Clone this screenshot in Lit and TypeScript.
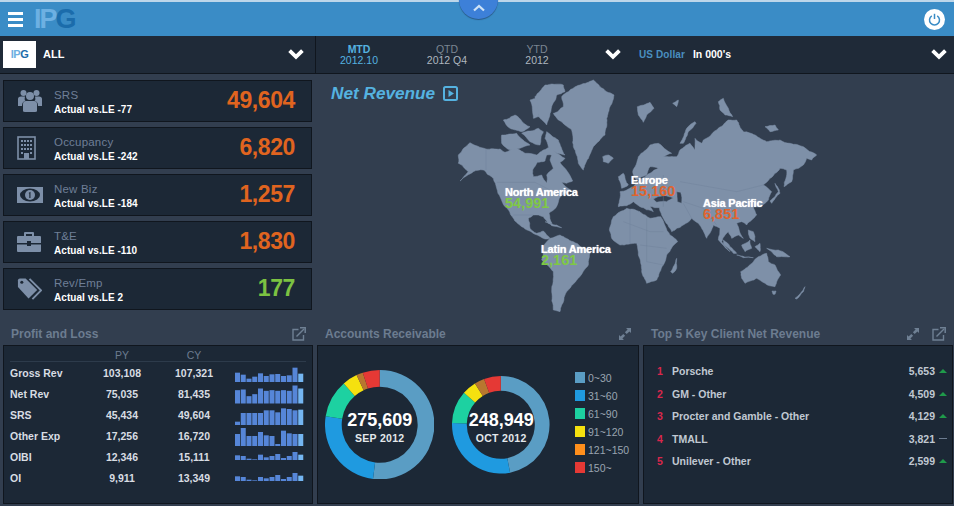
import { LitElement, html, css, svg } from "lit";
import { customElement } from "lit/decorators.js";

const LAND = [
  "M25,240 L60,203 L108,222 L150,222 L165,232 L195,215 L225,235 L260,240 L280,225 L300,215 L320,235 L345,250 L330,262 L345,280 L368,318 L350,325 L335,322 L362,345 L345,355 L328,370 L318,398 L297,415 L306,445 L296,445 L280,425 L250,420 L235,430 L240,460 L260,475 L280,468 L290,480 L300,490 L285,492 L255,478 L215,455 L190,430 L165,395 L140,340 L130,310 L100,285 L70,290 L30,318 L55,290 L25,265 Z M248,285 L262,262 L285,258 L290,240 L305,240 L300,255 L310,280 L290,300 L290,325 L275,300 L250,305 Z",
  "M310,115 L340,95 L335,65 L355,50 L390,30 L430,15 L450,35 L470,50 L492,60 L480,95 L470,130 L465,180 L430,215 L400,285 L385,265 L370,215 L365,165 L345,150 L325,135 Z",
  "M255,65 L285,30 L340,30 L345,50 L320,60 L305,95 L290,150 L270,130 L262,100 Z",
  "M240,75 L262,70 L268,125 L250,130 Z",
  "M160,135 L195,120 L240,155 L215,170 L180,160 Z",
  "M155,180 L200,175 L240,210 L180,225 L155,205 Z",
  "M215,175 L265,160 L280,170 L270,210 L240,200 Z",
  "M290,170 L325,195 L345,240 L320,235 L295,215 L285,190 Z",
  "M458,245 L475,240 L490,250 L475,265 L460,260 Z",
  "M562,95 L600,82 L612,100 L590,120 L580,142 L565,120 Z",
  "M668,85 L685,75 L680,95 Z",
  "M690,205 L710,160 L735,140 L738,145 L715,170 L700,205 Z",
  "M805,80 L820,70 L835,100 L848,125 L825,120 L810,105 Z",
  "M945,155 L975,150 L985,165 L960,170 Z",
  "M548,290 L565,245 L600,210 L625,205 L650,225 L665,235 L640,245 L680,245 L690,225 L720,205 L735,225 L735,190 L755,205 L760,195 L800,165 L835,135 L860,135 L880,170 L915,180 L950,200 L990,195 L1020,205 L1060,215 L1100,240 L1085,255 L1070,250 L1060,270 L1030,285 L1025,320 L1002,335 L1010,285 L990,280 L960,310 L940,330 L965,350 L955,375 L930,395 L910,395 L920,420 L890,450 L875,440 L860,445 L880,490 L865,480 L845,490 L835,470 L815,500 L840,530 L805,495 L810,460 L790,450 L770,490 L745,445 L725,430 L700,450 L665,470 L640,430 L628,398 L600,395 L610,410 L570,395 L550,380 L530,392 L505,395 L510,350 L530,345 L550,335 L570,315 L600,295 L625,280 L600,275 L590,300 L560,315 Z M610,372 L640,362 L670,370 L650,380 L620,382 Z M680,350 L692,352 L695,385 L682,380 Z",
  "M505,305 L520,295 L535,330 L515,340 Z",
  "M478,465 L490,425 L530,400 L570,410 L600,430 L632,425 L660,480 L683,500 L650,540 L640,570 L620,615 L590,625 L575,590 L565,540 L560,505 L510,510 L485,490 Z",
  "M662,590 L680,550 L680,580 L668,595 Z",
  "M872,590 L910,560 L925,545 L950,535 L955,560 L975,570 L992,600 L975,635 L945,625 L920,610 L885,625 L875,610 Z",
  "M1035,670 L1055,650 L1065,635 L1060,650 L1040,672 Z",
  "M966,648 L978,648 L975,658 L969,658 Z",
  "M820,495 L860,535 L850,535 L820,505 Z",
  "M875,510 L900,495 L905,520 L885,530 Z",
  "M860,540 L910,548 L880,548 Z",
  "M915,515 L930,505 L930,530 Z",
  "M950,520 L985,525 L1020,545 L980,545 Z",
  "M895,465 L910,470 L915,500 L900,490 Z",
  "M960,378 L985,350 L975,325 L988,345 L990,355 L965,385 Z",
  "M285,440 L320,450 L335,458 L305,452 Z",
  "M300,490 L330,480 L370,500 L420,530 L415,570 L385,610 L360,640 L345,660 L335,690 L330,710 L310,705 L305,650 L310,590 L275,555 L280,515 Z",
];

const BORDERS = [
  "M108,222 L108,285",
  "M140,322 L255,322 L300,345",
  "M190,420 L250,420",
  "M520,440 L600,470 L640,470",
  "M540,402 L540,505",
  "M590,430 L590,560 L640,570",
  "M570,510 L650,520",
  "M690,320 L860,350 L940,330",
  "M640,300 L640,395",
  "M700,380 L760,400 L800,450",
  "M700,385 L725,430",
];

let seed = 7;
function rnd() {
  seed = (seed * 16807) % 2147483647;
  return seed / 2147483647 - 0.5;
}

function rough(a: number[], b: number[], out: number[][]) {
  const dx = b[0] - a[0];
  const dy = b[1] - a[1];
  const len = Math.hypot(dx, dy);
  if (len < 9) {
    out.push(b);
    return;
  }
  const amt = Math.min(len * 0.16, 5) * rnd();
  const m = [(a[0] + b[0]) / 2 - (dy / len) * amt, (a[1] + b[1]) / 2 + (dx / len) * amt];
  rough(a, m, out);
  rough(m, b, out);
}

function roughen(d: string) {
  return d
    .split(/(?=M)/)
    .map((sub) => {
      const pts = (sub.match(/-?\d+,-?\d+/g) || []).map((p) => p.split(",").map(Number));
      const out: number[][] = [pts[0]];
      pts.forEach((p, i) => rough(p, pts[(i + 1) % pts.length], out));
      return "M" + out.map((p) => p[0].toFixed(1) + "," + p[1].toFixed(1)).join(" L") + " Z";
    })
    .join(" ");
}

const ROUGH_LAND = LAND.map(roughen);

const CHARTS: { base: number; h: number[] }[] = [
  { base: 20, h: [28, 22, 10, 16, 26, 18, 23, 24, 18, 20, 43, 25] },
  { base: 20.5, h: [40, 42, 22, 28, 45, 38, 40, 38, 40, 38, 54, 45] },
  { base: 21, h: [10, 36, 36, 36, 36, 44, 44, 38, 50, 48, 44, 46] },
  { base: 21, h: [36, 54, 30, 30, 42, 32, 30, 6, 46, 38, 36, 36] },
  { base: 14, h: [14, 12, 4, 2, 16, 8, 12, 18, 6, 12, 24, 16] },
  { base: 14, h: [14, 12, 4, 2, 12, 8, 12, 18, 6, 12, 24, 16] },
];

const ROWS = [
  ["Gross Rev", "103,108", "107,321"],
  ["Net Rev", "75,035", "81,435"],
  ["SRS", "45,434", "49,604"],
  ["Other Exp", "17,256", "16,720"],
  ["OIBI", "12,346", "15,111"],
  ["OI", "9,911", "13,349"],
];

const COLORS = ["#5a9dc4", "#1f9ae0", "#1dd1a1", "#f5e10f", "#b8772f", "#e53935"];
const LEGEND = [
  ["0~30", "#5a9dc4"],
  ["31~60", "#1f9ae0"],
  ["61~90", "#1dd1a1"],
  ["91~120", "#f5e10f"],
  ["121~150", "#ff8f1c"],
  ["150~", "#e53935"],
];

const CLIENTS: [string, string, string, string][] = [
  ["1", "Porsche", "5,653", "up"],
  ["2", "GM - Other", "4,509", "up"],
  ["3", "Procter and Gamble - Other", "4,129", "up"],
  ["4", "TMALL", "3,821", "flat"],
  ["5", "Unilever - Other", "2,599", "up"],
];

function pt(r: number, deg: number) {
  const a = (deg * Math.PI) / 180;
  return [r * Math.sin(a), -r * Math.cos(a)].map((v) => v.toFixed(2));
}

function donut(R: number, r: number, stops: number[]) {
  const s = 2 * R;
  let prev = 0;
  const segs = stops.map((end, i) => {
    const large = end - prev > 180 ? 1 : 0;
    const [x1, y1] = pt(R, prev);
    const [x2, y2] = pt(R, end);
    const [x3, y3] = pt(r, end);
    const [x4, y4] = pt(r, prev);
    const d = `M${x1},${y1} A${R},${R} 0 ${large} 1 ${x2},${y2} L${x3},${y3} A${r},${r} 0 ${large} 0 ${x4},${y4} Z`;
    prev = end;
    return svg`<path d=${d} fill=${COLORS[i]}></path>`;
  });
  return html`<svg width=${s} height=${s} viewBox="${-R} ${-R} ${s} ${s}">${segs}</svg>`;
}

const chevron = html`<svg class="chev" width="16" height="12" viewBox="0 0 16 12"><path d="M1.6 2.6 L8 8.8 L14.4 2.6" fill="none" stroke="#fff" stroke-width="3.8"></path></svg>`;

const extIcon = html`<svg class="tool" width="14" height="14" viewBox="0 0 14 14" fill="none" stroke="#6f8094" stroke-width="1.4"><path d="M6.5 2.5 H1 V13 H11.5 V8"></path><path d="M4.5 9.5 L12 2"></path><path d="M8 .8 H13.2 V6 " stroke-width="1.5"></path></svg>`;
const expandIcon = html`<svg class="tool" width="14" height="14" viewBox="0 0 14 14" fill="#6f8094"><path d="M8 1 H13 V6 L11.4 4.4 L8.7 7.1 L6.9 5.3 L9.6 2.6 Z"></path><path d="M6 13 H1 V8 L2.6 9.6 L5.3 6.9 L7.1 8.7 L4.4 11.4 Z"></path></svg>`;

const ICONS = {
  people: html`<svg width="26" height="26" viewBox="0 0 26 26" fill="#7d8fa8"><circle cx="6.5" cy="5" r="3"></circle><circle cx="19.5" cy="5" r="3"></circle><circle cx="13" cy="8" r="4"></circle><path d="M1 11 Q1 8.5 4 8.5 H8 Q7 13 9 13 Q5 13 5 18 H1 Z"></path><path d="M25 11 Q25 8.5 22 8.5 H18 Q19 13 17 13 Q21 13 21 18 H25 Z"></path><path d="M6 16 Q6 13 9 13 H17 Q20 13 20 16 V23 Q20 24 18 24 H8 Q6 24 6 23 Z"></path></svg>`,
  building: html`<svg width="19" height="24" viewBox="0 0 19 24"><rect x="1" y="1" width="17" height="22" fill="none" stroke="#7d8fa8" stroke-width="1.6"></rect><g fill="#7d8fa8"><rect x="4" y="4" width="2" height="2"></rect><rect x="7" y="4" width="2" height="2"></rect><rect x="10" y="4" width="2" height="2"></rect><rect x="13" y="4" width="2" height="2"></rect><rect x="4" y="8" width="2" height="2"></rect><rect x="7" y="8" width="2" height="2"></rect><rect x="10" y="8" width="2" height="2"></rect><rect x="13" y="8" width="2" height="2"></rect><rect x="4" y="12" width="2" height="2"></rect><rect x="7" y="12" width="2" height="2"></rect><rect x="10" y="12" width="2" height="2"></rect><rect x="13" y="12" width="2" height="2"></rect><rect x="4" y="16" width="2" height="2"></rect><rect x="13" y="16" width="2" height="2"></rect><rect x="7" y="17" width="5" height="6"></rect></g></svg>`,
  money: html`<svg width="26" height="18" viewBox="0 0 26 18"><rect x="0" y="1" width="26" height="16" fill="#7d8fa8"></rect><ellipse cx="13" cy="9" rx="10" ry="6.5" fill="#1c2836"></ellipse><circle cx="13" cy="9" r="5" fill="#7d8fa8"></circle><path d="M11.5 7 L13.5 5.8 V12 H12.3 V7.6 Z" fill="#1c2836"></path></svg>`,
  case: html`<svg width="24" height="22" viewBox="0 0 24 22" fill="#7d8fa8"><path d="M7 5 V2 Q7 1 8 1 H16 Q17 1 17 2 V5 H15 V3 H9 V5 Z"></path><path d="M0 6 Q0 5 1 5 H23 Q24 5 24 6 V12 H14 V10 H10 V12 H0 Z"></path><path d="M0 13.5 H10 V15 H14 V13.5 H24 V20 Q24 21 23 21 H1 Q0 21 0 20 Z"></path></svg>`,
  tags: html`<svg width="25" height="24" viewBox="0 0 26 24"><path d="M1 3 Q1 1 3 1 H9 L21 13 L12 22 L1 10 Z" fill="#7d8fa8"></path><circle cx="5" cy="5" r="1.6" fill="#1c2836"></circle><path d="M13 1.5 L25 13.5 L16 22.5" fill="none" stroke="#7d8fa8" stroke-width="2"></path></svg>`,
};

const KPIS = [
  { icon: ICONS.people, name: "SRS", note: "Actual vs.LE -77", value: "49,604", good: false },
  { icon: ICONS.building, name: "Occupancy", note: "Actual vs.LE -242", value: "6,820", good: false },
  { icon: ICONS.money, name: "New Biz", note: "Actual vs.LE -184", value: "1,257", good: false },
  { icon: ICONS.case, name: "T&E", note: "Actual vs.LE -110", value: "1,830", good: false },
  { icon: ICONS.tags, name: "Rev/Emp", note: "Actual vs.LE 2", value: "177", good: true },
];

const REGIONS = [
  { cls: "na", name: "North America", value: "54,991", good: true },
  { cls: "eu", name: "Europe", value: "15,160", good: false },
  { cls: "ap", name: "Asia Pacific", value: "6,851", good: false },
  { cls: "la", name: "Latin America", value: "2,161", good: true },
];

@customElement("app-root")
export class AppRoot extends LitElement {
  static styles = css`
    :host { display: block; width: 954px; height: 506px; overflow: hidden; position: relative; background: #323e4f; font-family: "Liberation Sans", Arial, sans-serif; color: #fff; }
    svg { display: block; }

    .top { height: 36px; box-sizing: border-box; border-top: 2px solid #bcd6ea; background: #3a8cc6; display: flex; align-items: center; padding: 0 9px 0 8px; }
    .burger { display: flex; flex-direction: column; gap: 3px; width: 15px; }
    .burger i { display: block; height: 3px; background: #fff; }
    .logo { margin-left: 11px; font-size: 27px; font-weight: 700; letter-spacing: -2px; line-height: 1; color: #6db0e2; }
    .logo b { color: #1b6cab; }
    .power { margin-left: auto; width: 21px; height: 21px; border-radius: 50%; background: #fff; display: flex; align-items: center; justify-content: center; }
    .tab { position: absolute; left: 459px; top: -20px; width: 39px; height: 39px; border-radius: 50%; background: #3d80d8; box-shadow: 0 1px 1px #2a5a86; display: flex; align-items: flex-end; justify-content: center; padding-bottom: 7px; box-sizing: border-box; }

    .filters { height: 38px; box-sizing: border-box; background: #1f2a38; border-bottom: 1px solid #10161e; display: flex; }
    .f-left { width: 316px; box-sizing: border-box; border-right: 1px solid #10161e; display: flex; align-items: center; padding: 0 11px 1px 3px; }
    .brand { width: 33px; height: 27px; background: #fff; display: flex; align-items: center; justify-content: center; font-size: 11px; font-weight: 700; color: #1b6cab; letter-spacing: -.5px; }
    .brand span { color: #6db0e2; }
    .all { margin-left: 7px; font-size: 11px; font-weight: 700; }
    .f-left .chev { margin-left: auto; }
    .f-right { flex: 1; display: flex; align-items: center; padding: 0 7px 1px 0; }
    .period { width: 90px; text-align: center; font-size: 10.5px; line-height: 10.5px; color: #7b8692; padding-top: 1px; }
    .period:nth-child(1) { width: 86px; }
    .period b { display: block; font-weight: 400; color: #aeb6bf; }
    .period.on { color: #55b2e0; font-weight: 700; }
    .period.on b { color: #55b2e0; }
    .f-right > .chev { margin-left: 23px; }
    .cur { margin-left: 18px; font-size: 10px; font-weight: 700; color: #4a8fc0; letter-spacing: .1px; }
    .unit { margin-left: 8px; font-size: 10.5px; font-weight: 700; }
    .f-right .unit + .chev { margin-left: auto; }

    .main { height: 249px; display: flex; }
    .kpis { width: 309px; margin-left: 3px; padding-top: 6px; display: flex; flex-direction: column; gap: 5px; }
    .kpi { height: 42px; box-sizing: border-box; border: 1px solid #10161e; background: #1c2836; display: flex; align-items: center; padding-right: 16px; }
    .k-icon { width: 50px; display: flex; padding-left: 13px; box-sizing: border-box; }
    .k-text { padding-top: 2px; }
    .k-name { font-size: 11.5px; color: #6f7f97; letter-spacing: .2px; line-height: 14px; }
    .k-note { font-size: 10px; font-weight: 700; line-height: 15px; letter-spacing: .05px; }
    .k-value { margin-left: auto; padding-bottom: 2px; font-size: 23px; font-weight: 700; letter-spacing: -.4px; color: #e0641f; }
    .k-value.good { color: #7cc242; }

    .map { flex: 1; position: relative; }
    .map-title { margin: 9px 0 0 19px; display: flex; align-items: center; gap: 8px; font-size: 17.2px; font-weight: 700; font-style: italic; color: #55b2e0; }
    .map-svg { position: absolute; left: 138px; top: 1px; }
    .label { position: absolute; font-weight: 700; font-size: 11px; line-height: 11px; letter-spacing: -.2px; text-shadow: 0 0 1px #fff; }
    .label b { display: block; font-size: 14.5px; line-height: 11px; letter-spacing: 0; text-shadow: none; color: #e0642f; }
    .label b.good { color: #7fc845; }
    .na { left: 193px; top: 113px; }
    .eu { left: 319px; top: 101px; }
    .ap { left: 391px; top: 124px; }
    .la { left: 229px; top: 170px; }

    .bottom { display: grid; grid-template-columns: 310px 322px 310px; gap: 4px; padding-left: 3px; }
    .head { height: 22px; display: flex; align-items: center; gap: 12px; padding: 0 7px 0 8px; font-size: 12px; font-weight: 700; color: #6c7c90; }
    .head .tool:first-of-type { margin-left: auto; }
    .panel { height: 159px; box-sizing: border-box; border: 1px solid #10161e; background: #1c2836; position: relative; }

    .table { padding: 3px 6px 0; }
    .tr { display: grid; grid-template-columns: 76px 72px 72px 78px; align-items: center; height: 21px; font-size: 10.5px; font-weight: 700; color: #d8dde3; }
    .tr > span { text-align: center; }
    .tr > span:first-child { text-align: left; }
    .tr svg { margin-left: 5px; }
    .th { height: 13px; color: #6c7c90; font-weight: 400; border-bottom: 1px solid #2d3b4b; box-sizing: border-box; }

    .ar { display: flex; align-items: flex-start; padding-left: 7px; }
    .donut { position: relative; }
    .d1 { margin-top: 24px; }
    .d2 { margin-top: 30px; margin-left: 18px; }
    .center { position: absolute; inset: 0; padding-top: 5px; box-sizing: border-box; display: flex; flex-direction: column; align-items: center; justify-content: center; font-weight: 700; }
    .center strong { font-size: 18px; line-height: 21px; }
    .center em { font-style: normal; font-size: 10.5px; line-height: 13px; letter-spacing: .3px; color: #e4e8ec; margin-top: 1px; }
    .legend { margin: 26px 0 0 25px; display: flex; flex-direction: column; gap: 7px; }
    .legend div { display: flex; align-items: center; gap: 3px; font-size: 10.5px; height: 11px; color: #9aa5b1; }
    .legend i { width: 10px; height: 11px; display: block; }

    .clients { padding: 14px 5px 0 13px; }
    .client { height: 22.5px; display: flex; align-items: center; font-size: 10.5px; font-weight: 700; color: #c0c8d2; }
    .client .n { width: 15px; color: #d9274c; }
    .client .v { margin-left: auto; width: 32px; text-align: right; }
    .mark { width: 8px; margin-left: 4px; height: 4px; display: block; }
    .up { width: 0; height: 0; border-left: 4px solid transparent; border-right: 4px solid transparent; border-bottom: 4px solid #1f9a4a; }
    .flat { height: 1px; background: #6c7c90; }
  `;

  render() {
    return html`
      <div class="top">
        <div class="burger"><i></i><i></i><i></i></div>
        <div class="logo">IP<b>G</b></div>
        <div class="power">
          <svg width="13" height="13" viewBox="0 0 13 13" fill="none" stroke="#3a8cc6" stroke-width="1.5"><path d="M3.8 2.8 A5 5 0 1 0 9.2 2.8"></path><path d="M6.5 .8 V6"></path></svg>
        </div>
      </div>
      <div class="tab">
        <svg width="14" height="8" viewBox="0 0 14 8"><path d="M2 6.5 L7 2 L12 6.5" fill="none" stroke="#cfe3f7" stroke-width="2.2"></path></svg>
      </div>

      <div class="filters">
        <div class="f-left">
          <div class="brand"><span>IP</span>G</div>
          <div class="all">ALL</div>
          ${chevron}
        </div>
        <div class="f-right">
          <div class="period on">MTD<b>2012.10</b></div>
          <div class="period">QTD<b>2012 Q4</b></div>
          <div class="period">YTD<b>2012</b></div>
          ${chevron}
          <div class="cur">US Dollar</div>
          <div class="unit">In 000's</div>
          ${chevron}
        </div>
      </div>

      <div class="main">
        <div class="kpis">
          ${KPIS.map(
            (k) => html`
              <div class="kpi">
                <div class="k-icon">${k.icon}</div>
                <div class="k-text">
                  <div class="k-name">${k.name}</div>
                  <div class="k-note">${k.note}</div>
                </div>
                <div class="k-value ${k.good ? "good" : ""}">${k.value}</div>
              </div>
            `
          )}
        </div>
        <div class="map">
          <svg class="map-svg" width="380" height="240" viewBox="0 0 1140 720" fill="#7e90a8">
            ${ROUGH_LAND.map((d) => svg`<path d=${d} fill-rule="evenodd" stroke="#7e90a8" stroke-width="1.5" stroke-linejoin="round"></path>`)}
            ${BORDERS.map((d) => svg`<path d=${d} fill="none" stroke="#6d7f97" stroke-width="1.2"></path>`)}
          </svg>
          <div class="map-title">
            Net Revenue
            <svg width="15" height="15" viewBox="0 0 15 15"><rect x="1" y="1" width="13" height="13" rx="1.5" fill="none" stroke="#55b2e0" stroke-width="2"></rect><path d="M5.5 4 L11 7.5 L5.5 11 Z" fill="#55b2e0"></path></svg>
          </div>
          ${REGIONS.map(
            (r) => html`<div class="label ${r.cls}">${r.name}<b class=${r.good ? "good" : ""}>${r.value}</b></div>`
          )}
        </div>
      </div>

      <div class="bottom">
        <section>
          <div class="head">Profit and Loss ${extIcon}</div>
          <div class="panel table">
            <div class="tr th"><span></span><span>PY</span><span>CY</span><span></span></div>
            ${ROWS.map(
              (r, i) => html`
                <div class="tr">
                  <span>${r[0]}</span><span>${r[1]}</span><span>${r[2]}</span>
                  <svg width="70" height="21">
                    ${CHARTS[i].h.map((h, j) => {
                      const bh = h / 3;
                      return svg`<rect x=${j * 5.75} y=${CHARTS[i].base - bh} width="5" height=${bh} fill=${j === 11 ? "#74b6f2" : "#5686d8"}></rect>`;
                    })}
                  </svg>
                </div>
              `
            )}
          </div>
        </section>
        <section>
          <div class="head">Accounts Receivable ${expandIcon}</div>
          <div class="panel ar">
            <div class="donut d1">
              ${donut(54.7, 38, [187, 279, 319, 335, 342, 360])}
              <div class="center"><strong>275,609</strong><em>SEP 2012</em></div>
            </div>
            <div class="donut d2">
              ${donut(48.8, 34, [169, 272, 311, 328, 340, 360])}
              <div class="center"><strong>248,949</strong><em>OCT 2012</em></div>
            </div>
            <div class="legend">
              ${LEGEND.map((l) => html`<div><i style="background:${l[1]}"></i>${l[0]}</div>`)}
            </div>
          </div>
        </section>
        <section>
          <div class="head">Top 5 Key Client Net Revenue ${expandIcon} ${extIcon}</div>
          <div class="panel clients">
            ${CLIENTS.map(
              (c) => html`
                <div class="client">
                  <span class="n">${c[0]}</span><span>${c[1]}</span>
                  <span class="v">${c[2]}</span><i class="mark ${c[3]}"></i>
                </div>
              `
            )}
          </div>
        </section>
      </div>
    `;
  }
}
